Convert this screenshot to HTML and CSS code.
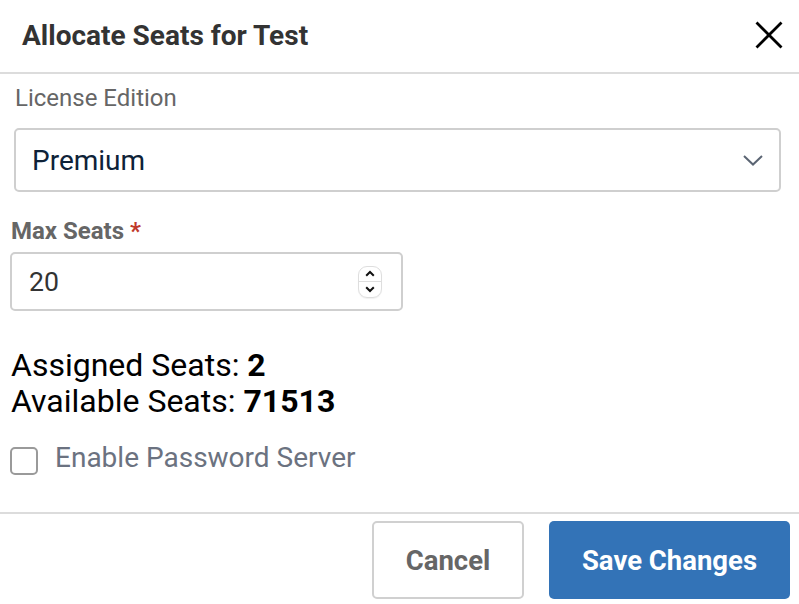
FILE: index.html
```html
<!DOCTYPE html>
<html lang="en">
<head>
<meta charset="utf-8">
<title>Allocate Seats for Test</title>
<link rel="stylesheet" href="styles.css">
</head>
<body>
<div class="modal">
  <header class="modal-header">
    <h1 class="modal-title">Allocate Seats for Test</h1>
    <button class="close-btn" aria-label="Close">
      <svg width="28" height="28" viewBox="0 0 28 28"><path d="M1.5 1.5 L26.5 26.5 M26.5 1.5 L1.5 26.5" stroke="#000" stroke-width="2.8" fill="none"/></svg>
    </button>
  </header>
  <div class="modal-body">
    <div class="field field-edition">
      <div class="field-label">License Edition</div>
      <div class="select-box">
        <span class="select-value">Premium</span>
        <svg class="chevron" width="20" height="11" viewBox="0 0 20 11"><path d="M1 1 L10 9.5 L19 1" stroke="#5b6573" stroke-width="2" fill="none"/></svg>
      </div>
    </div>
    <div class="field field-seats">
      <div class="field-label bold">Max Seats <span class="req">*</span></div>
      <div class="number-box">
        <span class="number-value">20</span>
        <span class="spinner">
          <span class="spin-half">
            <svg width="10" height="7" viewBox="0 0 10 7"><path d="M1.2 5.8 L5 2 L8.8 5.8" stroke="#111" stroke-width="2" fill="none"/></svg>
          </span>
          <span class="spin-half spin-down">
            <svg width="10" height="7" viewBox="0 0 10 7"><path d="M1.2 1.2 L5 5 L8.8 1.2" stroke="#111" stroke-width="2" fill="none"/></svg>
          </span>
        </span>
      </div>
    </div>
    <div class="stats">
      <div>Assigned Seats: <b>2</b></div>
      <div>Available Seats: <b>71513</b></div>
    </div>
    <label class="check-row">
      <span class="check-box"></span>
      <span class="check-label">Enable Password Server</span>
    </label>
  </div>
  <footer class="modal-footer">
    <button class="btn btn-cancel">Cancel</button>
    <button class="btn btn-save">Save Changes</button>
  </footer>
</div>
</body>
</html>
```

FILE: styles.css
```css
* { box-sizing: border-box; }
html, body {
  margin: 0;
  padding: 0;
  background: #fff;
}
body {
  font-family: Roboto, "Liberation Sans", Arial, sans-serif;
  width: 799px;
  height: 604px;
  overflow: hidden;
}
.modal {
  display: flex;
  flex-direction: column;
  width: 799px;
}
.modal-header {
  height: 74px;
  display: flex;
  align-items: center;
  justify-content: space-between;
  padding: 0 16px 0 22px;
  border-bottom: 2px solid #dcdcdc;
}
.modal-title {
  margin: 0;
  font-size: 28px;
  font-weight: 700;
  color: #333;
  line-height: 32px;
}
.close-btn {
  background: none;
  border: 0;
  padding: 0;
  width: 28px;
  height: 28px;
  display: flex;
  margin-bottom: 2px;
}
.modal-body {
  padding: 10px 18px 0 10px;
  height: 440px;
  border-bottom: 2px solid #dcdcdc;
}
.field-edition {
  padding-left: 4px;
}
.field-label {
  font-size: 24px;
  line-height: 28px;
  color: #666;
  padding-left: 1px;
}
.field-label.bold {
  font-weight: 700;
  font-size: 24px;
  line-height: 28px;
}
.req {
  color: #c0392b;
}
.select-box {
  margin-top: 16px;
  height: 64px;
  border: 2px solid #cfcfcf;
  border-radius: 5px;
  display: flex;
  align-items: center;
  justify-content: space-between;
  padding: 0 16px 0 16px;
}
.select-value {
  font-size: 28px;
  color: #0e2238;
}
.chevron {
  display: block;
}
.field-seats {
  margin-top: 25px;
}
.number-box {
  margin-top: 7px;
  width: 393px;
  height: 59px;
  border: 2px solid #cfcfcf;
  border-radius: 5px;
  display: flex;
  align-items: center;
  justify-content: space-between;
  padding: 0 19px 0 17px;
}
.number-value {
  font-size: 26.67px;
  color: #333;
}
.spinner {
  width: 24px;
  height: 32px;
  border: 1px solid #dedede;
  border-radius: 9px;
  display: flex;
  flex-direction: column;
  box-shadow: 0 1px 1px rgba(0,0,0,0.06);
}
.spin-half {
  flex: 1;
  display: flex;
  align-items: center;
  justify-content: center;
}
.spin-down {
  border-top: 1px solid #dedede;
}
.stats {
  margin-top: 36px;
  font-size: 32px;
  line-height: 36px;
  color: #000;
  padding-left: 1px;
}
.stats b {
  font-weight: 700;
}
.check-row {
  margin-top: 23px;
  display: flex;
  align-items: flex-start;
  gap: 17px;
}
.check-box {
  margin-top: 5px;
  width: 28px;
  height: 28px;
  border: 2px solid #9a9a9a;
  border-radius: 5px;
  flex: none;
}
.check-label {
  font-size: 28px;
  line-height: 32px;
  color: #6b7280;
}
.modal-footer {
  display: flex;
  justify-content: flex-end;
  gap: 25px;
  padding: 7px 9px 0 0;
}
.btn {
  height: 78px;
  border-radius: 5px;
  font-family: Roboto, "Liberation Sans", Arial, sans-serif;
  font-size: 27.5px;
  font-weight: 700;
  cursor: pointer;
}
.btn-cancel {
  width: 152px;
  background: #fff;
  border: 2px solid #d0d0d0;
  color: #666;
}
.btn-save {
  width: 241px;
  background: #3373b7;
  border: 0;
  color: #fff;
}
```
